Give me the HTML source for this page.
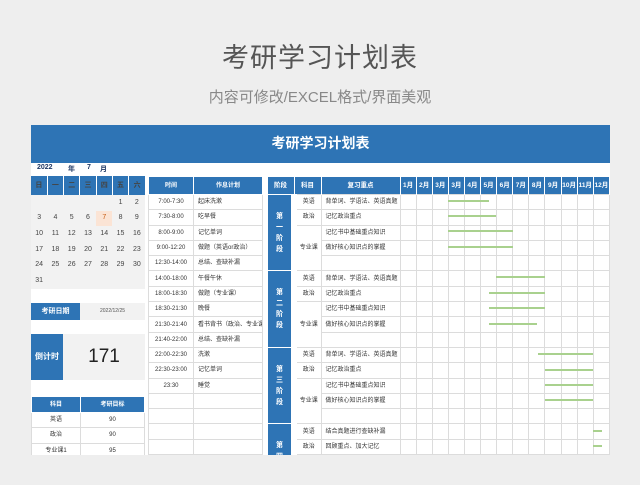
<!DOCTYPE html>
<html><head><meta charset="utf-8"><style>
*{margin:0;padding:0;box-sizing:border-box}
body{width:640px;height:485px;background:#eeeeee;font-family:"Liberation Sans","Noto Sans CJK SC",sans-serif;position:relative;overflow:hidden;color:#333}
.t1{position:absolute;top:36px;width:640px;text-align:center;font-size:27px;color:#555;letter-spacing:1px}
.t2{position:absolute;top:86px;width:640px;text-align:center;font-size:15px;color:#888}
.band{position:absolute;left:31px;top:125px;width:579px;height:38px;background:#2e74b5;color:#fff;font-weight:bold;font-size:14px;text-align:center;line-height:36px}
.sheet{position:absolute;left:31px;top:163px;width:579px;height:292px;background:#fff;overflow:hidden}
.a{position:absolute}
table{border-collapse:collapse;table-layout:fixed;position:absolute}
td{font-size:6px;text-align:center;overflow:hidden;white-space:nowrap;padding:0;line-height:8px}
.h td{background:#2e74b5;color:#fff;font-weight:bold;font-size:6.5px}
.cal td{height:15.6px;font-size:7px;color:#444}
.sch td{height:15.3px;border:1px solid #dcdcdc;font-size:6px}
.sch .h td{height:18px;border:1px solid #fff}
.pl td{height:15.3px;border:1px solid #dcdcdc}
.pl .h td{height:18px;border:1px solid #fff;border-bottom:none}
.l{text-align:left;padding-left:4px}
.stg{background:#2e74b5 !important;color:#fff;font-weight:bold;font-size:7px;line-height:11px;border-color:#fff !important;border-left:2px solid #fff !important;border-right:6px solid #fff !important;vertical-align:middle}
.bar{position:absolute;height:2px;background:#a9d18e}
</style></head><body>
<div class="t1">考研学习计划表</div>
<div class="t2">内容可修改/EXCEL格式/界面美观</div>
<div class="band">考研学习计划表</div>
<div class="sheet">
<div class="a" style="left:6px;top:1px;font-size:7px;font-weight:bold;color:#1f3864">2022</div>
<div class="a" style="left:37px;top:1px;font-size:7px;font-weight:bold;color:#1f3864">年</div>
<div class="a" style="left:56px;top:1px;font-size:7px;font-weight:bold;color:#1f3864">7</div>
<div class="a" style="left:69px;top:1px;font-size:7px;font-weight:bold;color:#1f3864">月</div>
<div class="a" style="left:0;top:32px;width:114px;height:94px;background:#f2f2f2"></div>
<table class="cal" style="left:0;top:13px;width:114px">
<tr class="h"><td style="height:19px;border-right:1px solid #fff">日</td><td style="border-right:1px solid #fff">一</td><td style="border-right:1px solid #fff">二</td><td style="border-right:1px solid #fff">三</td><td style="border-right:1px solid #fff">四</td><td style="border-right:1px solid #fff">五</td><td>六</td></tr>
<tr><td></td><td></td><td></td><td></td><td></td><td>1</td><td>2</td></tr>
<tr><td>3</td><td>4</td><td>5</td><td>6</td><td style="background:#fbe4d5;color:#c55a11">7</td><td>8</td><td>9</td></tr>
<tr><td>10</td><td>11</td><td>12</td><td>13</td><td>14</td><td>15</td><td>16</td></tr>
<tr><td>17</td><td>18</td><td>19</td><td>20</td><td>21</td><td>22</td><td>23</td></tr>
<tr><td>24</td><td>25</td><td>26</td><td>27</td><td>28</td><td>29</td><td>30</td></tr>
<tr><td>31</td><td></td><td></td><td></td><td></td><td></td><td></td></tr>
</table>
<div class="a" style="left:0;top:140px;width:49px;height:17px;background:#2e74b5;color:#fff;font-size:7px;font-weight:bold;text-align:center;line-height:17px">考研日期</div>
<div class="a" style="left:49px;top:140px;width:65px;height:17px;background:#f2f2f2;font-size:5px;text-align:center;line-height:17px;color:#555">2022/12/25</div>
<div class="a" style="left:0;top:171px;width:32px;height:46px;background:#2e74b5;color:#fff;font-size:8px;font-weight:bold;text-align:center;line-height:46px">倒计时</div>
<div class="a" style="left:32px;top:171px;width:82px;height:46px;background:#f2f2f2;font-size:19px;text-align:center;line-height:46px;color:#222">171</div>
<table class="sch" style="left:0;top:233px;width:114px">
<tr class="h"><td style="height:16px;width:49px">科目</td><td style="height:16px">考研目标</td></tr>
<tr><td>英语</td><td>90</td></tr><tr><td>政治</td><td>90</td></tr><tr><td>专业课1</td><td>95</td></tr>
</table>
<table class="sch" style="left:117px;top:13px;width:115px">
<tr class="h"><td style="width:45px">时间</td><td>作息计划</td></tr>
<tr><td>7:00-7:30</td><td class="l">起床洗漱</td></tr>
<tr><td>7:30-8:00</td><td class="l">吃早餐</td></tr>
<tr><td>8:00-9:00</td><td class="l">记忆单词</td></tr>
<tr><td>9:00-12:20</td><td class="l">做题（英语or政治）</td></tr>
<tr><td>12:30-14:00</td><td class="l">总结、查缺补漏</td></tr>
<tr><td>14:00-18:00</td><td class="l">午餐午休</td></tr>
<tr><td>18:00-18:30</td><td class="l">做题（专业课）</td></tr>
<tr><td>18:30-21:30</td><td class="l">晚餐</td></tr>
<tr><td>21:30-21:40</td><td class="l">看书背书（政治、专业课）</td></tr>
<tr><td>21:40-22:00</td><td class="l">总结、查缺补漏</td></tr>
<tr><td>22:00-22:30</td><td class="l">洗漱</td></tr>
<tr><td>22:30-23:00</td><td class="l">记忆单词</td></tr>
<tr><td>23:30</td><td class="l">睡觉</td></tr>
<tr><td></td><td></td></tr><tr><td></td><td></td></tr><tr><td></td><td></td></tr><tr><td></td><td></td></tr>
</table>
<table class="pl" style="left:235px;top:13px;width:344px">
<tr class="h"><td style="width:27px">阶段</td><td style="width:27px">科目</td><td style="width:79px">复习重点</td><td>1月</td><td>2月</td><td>3月</td><td>3月</td><td>4月</td><td>5月</td><td>6月</td><td>7月</td><td>8月</td><td>9月</td><td>10月</td><td>11月</td><td>12月</td></tr>
<tr><td class="stg" rowspan="5">第<br>一<br>阶<br>段</td><td>英语</td><td class="l">背单词、学语法、英语真题</td><td></td><td></td><td></td><td></td><td></td><td></td><td></td><td></td><td></td><td></td><td></td><td></td><td></td></tr>
<tr><td>政治</td><td class="l">记忆政治重点</td><td></td><td></td><td></td><td></td><td></td><td></td><td></td><td></td><td></td><td></td><td></td><td></td><td></td></tr>
<tr><td rowspan="3">专业课</td><td class="l">记忆书中基础重点知识</td><td></td><td></td><td></td><td></td><td></td><td></td><td></td><td></td><td></td><td></td><td></td><td></td><td></td></tr>
<tr><td class="l">做好核心知识点的掌握</td><td></td><td></td><td></td><td></td><td></td><td></td><td></td><td></td><td></td><td></td><td></td><td></td><td></td></tr>
<tr><td class="l"></td><td></td><td></td><td></td><td></td><td></td><td></td><td></td><td></td><td></td><td></td><td></td><td></td><td></td></tr>
<tr><td class="stg" rowspan="5">第<br>二<br>阶<br>段</td><td>英语</td><td class="l">背单词、学语法、英语真题</td><td></td><td></td><td></td><td></td><td></td><td></td><td></td><td></td><td></td><td></td><td></td><td></td><td></td></tr>
<tr><td>政治</td><td class="l">记忆政治重点</td><td></td><td></td><td></td><td></td><td></td><td></td><td></td><td></td><td></td><td></td><td></td><td></td><td></td></tr>
<tr><td rowspan="3">专业课</td><td class="l">记忆书中基础重点知识</td><td></td><td></td><td></td><td></td><td></td><td></td><td></td><td></td><td></td><td></td><td></td><td></td><td></td></tr>
<tr><td class="l">做好核心知识点的掌握</td><td></td><td></td><td></td><td></td><td></td><td></td><td></td><td></td><td></td><td></td><td></td><td></td><td></td></tr>
<tr><td class="l"></td><td></td><td></td><td></td><td></td><td></td><td></td><td></td><td></td><td></td><td></td><td></td><td></td><td></td></tr>
<tr><td class="stg" rowspan="5">第<br>三<br>阶<br>段</td><td>英语</td><td class="l">背单词、学语法、英语真题</td><td></td><td></td><td></td><td></td><td></td><td></td><td></td><td></td><td></td><td></td><td></td><td></td><td></td></tr>
<tr><td>政治</td><td class="l">记忆政治重点</td><td></td><td></td><td></td><td></td><td></td><td></td><td></td><td></td><td></td><td></td><td></td><td></td><td></td></tr>
<tr><td rowspan="3">专业课</td><td class="l">记忆书中基础重点知识</td><td></td><td></td><td></td><td></td><td></td><td></td><td></td><td></td><td></td><td></td><td></td><td></td><td></td></tr>
<tr><td class="l">做好核心知识点的掌握</td><td></td><td></td><td></td><td></td><td></td><td></td><td></td><td></td><td></td><td></td><td></td><td></td><td></td></tr>
<tr><td class="l"></td><td></td><td></td><td></td><td></td><td></td><td></td><td></td><td></td><td></td><td></td><td></td><td></td><td></td></tr>
<tr><td class="stg" rowspan="5">第<br>四<br>阶<br>段</td><td>英语</td><td class="l">结合真题进行查缺补漏</td><td></td><td></td><td></td><td></td><td></td><td></td><td></td><td></td><td></td><td></td><td></td><td></td><td></td></tr>
<tr><td>政治</td><td class="l">回顾重点、加大记忆</td><td></td><td></td><td></td><td></td><td></td><td></td><td></td><td></td><td></td><td></td><td></td><td></td><td></td></tr>
<tr><td rowspan="3">专业课</td><td class="l"></td><td></td><td></td><td></td><td></td><td></td><td></td><td></td><td></td><td></td><td></td><td></td><td></td><td></td></tr>
<tr><td class="l"></td><td></td><td></td><td></td><td></td><td></td><td></td><td></td><td></td><td></td><td></td><td></td><td></td><td></td></tr>
<tr><td class="l"></td><td></td><td></td><td></td><td></td><td></td><td></td><td></td><td></td><td></td><td></td><td></td><td></td><td></td></tr>
</table>
<div class="bar" style="left:417px;top:37px;width:41px"></div>
<div class="bar" style="left:417px;top:52px;width:48px"></div>
<div class="bar" style="left:417px;top:67px;width:65px"></div>
<div class="bar" style="left:417px;top:83px;width:65px"></div>
<div class="bar" style="left:465px;top:113px;width:49px"></div>
<div class="bar" style="left:458px;top:129px;width:56px"></div>
<div class="bar" style="left:458px;top:144px;width:56px"></div>
<div class="bar" style="left:458px;top:160px;width:48px"></div>
<div class="bar" style="left:507px;top:190px;width:55px"></div>
<div class="bar" style="left:514px;top:206px;width:48px"></div>
<div class="bar" style="left:514px;top:221px;width:48px"></div>
<div class="bar" style="left:514px;top:236px;width:48px"></div>
<div class="bar" style="left:562px;top:267px;width:9px"></div>
<div class="bar" style="left:562px;top:282px;width:9px"></div>
</div>
</body></html>
